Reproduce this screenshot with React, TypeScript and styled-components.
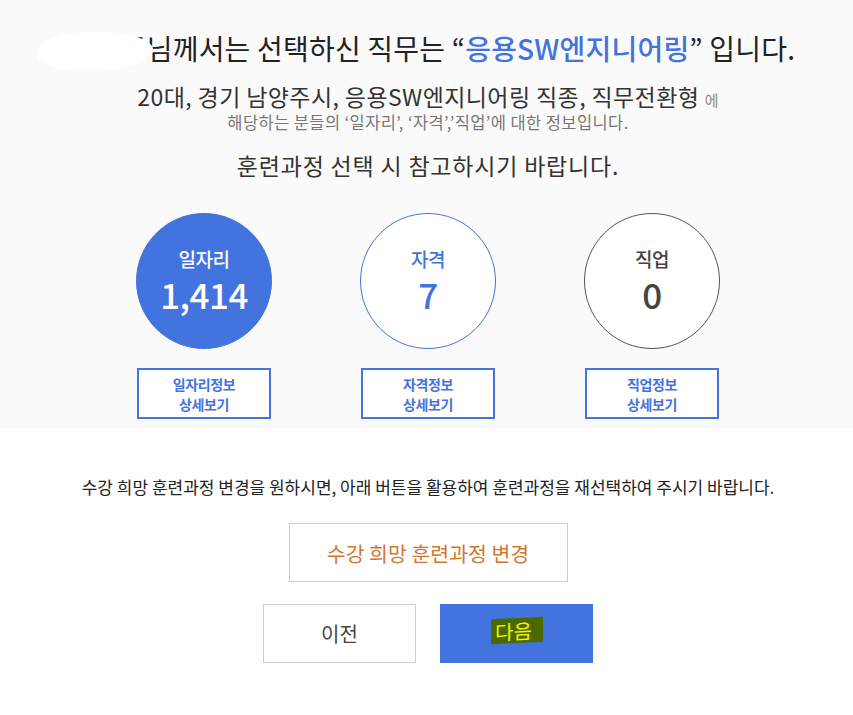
import React from "react";
import styled, { createGlobalStyle } from "styled-components";

const BLUE = "#4373de";

const GlobalStyle = createGlobalStyle`
  html, body {
    margin: 0;
    padding: 0;
    background: #fff;
    font-family: "Noto Sans CJK KR", "Noto Sans", sans-serif;
    color: #333;
  }
`;

const Page = styled.div`
  width: 853px;
  height: 715px;
  overflow: hidden;
  padding-left: 3px;
  box-sizing: border-box;
`;

const InfoSection = styled.section`
  background: #fafafa;
  height: 428px;
  margin-left: -3px;
  padding: 26px 0 0 3px;
  box-sizing: border-box;
  display: flex;
  flex-direction: column;
  align-items: center;
`;

const Title = styled.h2`
  margin: 0;
  font-size: 28px;
  font-weight: 400;
  letter-spacing: 0.2px;
  line-height: 44px;
  color: #222;
`;

/* the member's name is masked in the capture */
const Name = styled.span`
  position: relative;
  padding-left: 8px;
  &::after {
    content: "";
    position: absolute;
    left: -24px;
    right: -6px;
    top: 4px;
    bottom: -3px;
    background: #fff;
    border-radius: 50% 45% 55% 40%;
  }
`;

const Job = styled.span`
  color: ${BLUE};
  font-weight: 500;
`;

const Target = styled.p`
  margin: 14px 0 0;
  font-size: 23px;
  letter-spacing: 0.4px;
  line-height: 24px;
  color: #333;
`;

const Small = styled.span`
  font-size: 15px;
  color: #888;
  letter-spacing: 0;
`;

const Sub = styled.p`
  margin: 0;
  font-size: 16.5px;
  letter-spacing: 0.4px;
  line-height: 20px;
  color: #777;
`;

const Notice = styled.p`
  margin: 16px 0 0;
  font-size: 23px;
  letter-spacing: 0.8px;
  line-height: 34px;
  color: #333;
`;

const Cards = styled.div`
  display: grid;
  grid-template-columns: repeat(3, 136px);
  column-gap: 88px;
  margin-top: 31px;
`;

const Card = styled.div`
  display: flex;
  flex-direction: column;
  align-items: center;
  gap: 19px;
`;

const Circle = styled.div<{ $variant: "fill" | "blue" | "gray" }>`
  width: 136px;
  height: 136px;
  border-radius: 50%;
  box-sizing: border-box;
  display: flex;
  flex-direction: column;
  align-items: center;
  justify-content: center;
  background: ${(p) => (p.$variant === "fill" ? BLUE : "#fff")};
  border: 1px solid ${(p) => (p.$variant === "gray" ? "#555" : BLUE)};
  color: ${(p) =>
    p.$variant === "fill" ? "#fff" : p.$variant === "blue" ? BLUE : "#444"};
`;

const CircleLabel = styled.span`
  font-size: 19px;
  font-weight: 500;
  line-height: 26px;
  letter-spacing: -0.5px;
`;

const CircleValue = styled.span`
  font-size: 35px;
  font-weight: 500;
  line-height: 44px;
  letter-spacing: -0.5px;
`;

const DetailButton = styled.button`
  width: 134px;
  height: 51px;
  box-sizing: border-box;
  background: #fff;
  border: 2px solid ${BLUE};
  color: ${BLUE};
  font-family: inherit;
  font-size: 14px;
  font-weight: 700;
  line-height: 20px;
  letter-spacing: -0.4px;
  padding: 0;
  cursor: pointer;
`;

const ActionSection = styled.section`
  display: flex;
  flex-direction: column;
  align-items: center;
  padding-top: 48px;
`;

const Guide = styled.p`
  margin: 0;
  font-size: 17px;
  line-height: 22px;
  color: #222;
`;

const ChangeButton = styled.button`
  margin-top: 25px;
  width: 279px;
  height: 59px;
  background: #fff;
  border: 1px solid #ccc;
  color: #d2772f;
  font-family: inherit;
  font-size: 20.5px;
  cursor: pointer;
`;

const NavRow = styled.div`
  display: flex;
  gap: 24px;
  margin-top: 22px;
`;

const NavButton = styled.button<{ $primary?: boolean }>`
  width: 153px;
  height: 59px;
  box-sizing: border-box;
  border: 1px solid ${(p) => (p.$primary ? BLUE : "#ccc")};
  background: ${(p) => (p.$primary ? BLUE : "#fff")};
  color: #444;
  font-family: inherit;
  font-size: 20px;
  cursor: pointer;
`;

const Marked = styled.span`
  display: inline-block;
  background: #4a6a00;
  color: #f4f400;
  padding: 0 11px 0 4px;
  line-height: 25px;
  transform: translateY(-3px) skewY(-3deg);
`;

const stats = [
  { label: "일자리", value: "1,414", variant: "fill" as const, detail: "일자리정보" },
  { label: "자격", value: "7", variant: "blue" as const, detail: "자격정보" },
  { label: "직업", value: "0", variant: "gray" as const, detail: "직업정보" },
];

export default function App() {
  return (
    <Page>
      <GlobalStyle />
      <InfoSection>
        <Title>
          <Name>홍길동</Name>님께서는 선택하신 직무는 “<Job>응용SW엔지니어링</Job>” 입니다.
        </Title>
        <Target>
          20대, 경기 남양주시, 응용SW엔지니어링 직종, 직무전환형 <Small>에</Small>
        </Target>
        <Sub>해당하는 분들의 ‘일자리’, ‘자격’,’직업’에 대한 정보입니다.</Sub>
        <Notice>훈련과정 선택 시 참고하시기 바랍니다.</Notice>
        <Cards>
          {stats.map((s) => (
            <Card key={s.label}>
              <Circle $variant={s.variant}>
                <CircleLabel>{s.label}</CircleLabel>
                <CircleValue>{s.value}</CircleValue>
              </Circle>
              <DetailButton>
                {s.detail}
                <br />
                상세보기
              </DetailButton>
            </Card>
          ))}
        </Cards>
      </InfoSection>
      <ActionSection>
        <Guide>
          수강 희망 훈련과정 변경을 원하시면, 아래 버튼을 활용하여 훈련과정을 재선택하여 주시기 바랍니다.
        </Guide>
        <ChangeButton>수강 희망 훈련과정 변경</ChangeButton>
        <NavRow>
          <NavButton>이전</NavButton>
          <NavButton $primary>
            <Marked>다음</Marked>
          </NavButton>
        </NavRow>
      </ActionSection>
    </Page>
  );
}
